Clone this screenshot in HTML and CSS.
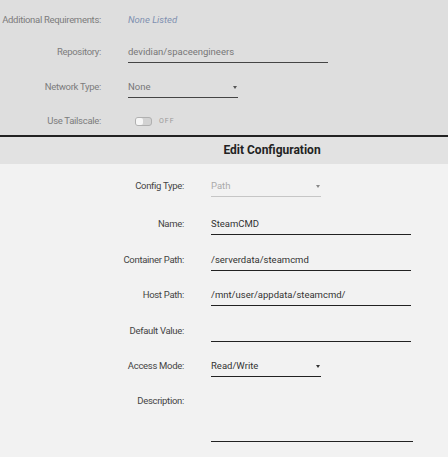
FILE: index.html
```html
<!DOCTYPE html>
<html>
<head>
<meta charset="utf-8">
<link rel="stylesheet" href="styles.css">
</head>
<body>
<section class="top">
  <div class="row r-req">
    <div class="label">Additional Requirements:</div>
    <div class="value none">None Listed</div>
  </div>
  <div class="row r-repo">
    <div class="label">Repository:</div>
    <div class="field wide">devidian/spaceengineers</div>
  </div>
  <div class="row r-net">
    <div class="label">Network Type:</div>
    <div class="field select">None<svg class="caret" width="4" height="3" viewBox="0 0 4 3"><polygon points="0,0 4,0 2,3"/></svg></div>
  </div>
  <div class="row r-ts">
    <div class="label">Use Tailscale:</div>
    <div class="value toggle-wrap"><span class="toggle"><span class="knob"></span></span><span class="off">OFF</span></div>
  </div>
</section>
<header class="band">Edit Configuration</header>
<section class="lower">
  <div class="row r-cfg">
    <div class="label">Config Type:</div>
    <div class="field select disabled">Path<svg class="caret" width="4" height="3" viewBox="0 0 4 3"><polygon points="0,0 4,0 2,3"/></svg></div>
  </div>
  <div class="row r-36">
    <div class="label">Name:</div>
    <div class="field wide">SteamCMD</div>
  </div>
  <div class="row r-35">
    <div class="label">Container Path:</div>
    <div class="field wide">/serverdata/steamcmd</div>
  </div>
  <div class="row r-36">
    <div class="label">Host Path:</div>
    <div class="field wide">/mnt/user/appdata/steamcmd/</div>
  </div>
  <div class="row r-35">
    <div class="label">Default Value:</div>
    <div class="field wide"></div>
  </div>
  <div class="row r-35">
    <div class="label">Access Mode:</div>
    <div class="field select">Read/Write<svg class="caret" width="4" height="3" viewBox="0 0 4 3"><polygon points="0,0 4,0 2,3"/></svg></div>
  </div>
  <div class="row r-desc">
    <div class="label">Description:</div>
    <div class="field area"></div>
  </div>
</section>
</body>
</html>
```
FILE: styles.css
```css
* { box-sizing: content-box; }
html, body { margin: 0; padding: 0; }
body {
  width: 448px;
  height: 457px;
  overflow: hidden;
  background: #f2f2f2;
  font-family: Roboto, "Noto Sans", sans-serif;
  font-size: 9.5px;
  color: #333;
}
.row {
  display: grid;
  column-gap: 27px;
  align-items: start;
}
.label {
  text-align: right;
  line-height: 20px;
  white-space: nowrap;
  letter-spacing: -0.3px;
}
.value { line-height: 20px; }
.field {
  position: relative;
  height: 20px;
  line-height: 20px;
  border-bottom: 1px solid #222;
  white-space: nowrap;
}
.wide { width: 200px; }
.select { width: 110px; }
.caret {
  position: absolute;
  right: 1px;
  top: 9px;
  fill: #333;
}

/* top section */
.top {
  background: #dedede;
  padding-top: 10px;
  height: 125px;
  border-bottom: 2px solid #222;
}
.top .row { grid-template-columns: 101px auto; }
.top .label { color: #7c7c7c; }
.top .field { color: #777; border-bottom-color: #444; }
.top .caret { fill: #555; }
.r-req { height: 32px; }
.r-repo { height: 35px; }
.r-net { height: 34px; }
.none { color: #8090b0; font-style: italic; }
.toggle-wrap { display: flex; align-items: center; height: 20px; gap: 7px; padding-left: 7px; }
.toggle {
  display: inline-block;
  width: 15px;
  height: 7px;
  border: 1px solid #b0b0b0;
  border-radius: 3px;
  background: #d2d2d2;
  position: relative;
}
.knob {
  position: absolute;
  left: 0;
  top: 0;
  width: 7px;
  height: 7px;
  border-radius: 2px;
  background: #f6f6f6;
}
.off { font-size: 7px; letter-spacing: 1px; color: #999; }

/* header band */
.band {
  background: #e2e2e2;
  height: 27px;
  line-height: 27px;
  text-align: center;
  padding-left: 96px;
  font-weight: bold;
  font-size: 12px;
  color: #222;
}

/* lower section */
.lower { padding-top: 12px; }
.lower .row { grid-template-columns: 184px auto; }
.lower .label { color: #444; }
.r-cfg { height: 38px; }
.r-35 { height: 35px; }
.r-36 { height: 36px; }
.disabled { color: #aaa; border-bottom-color: #c6c6c6; }
.disabled .caret { fill: #888; }
.area { width: 202px; height: 50px; }
```
